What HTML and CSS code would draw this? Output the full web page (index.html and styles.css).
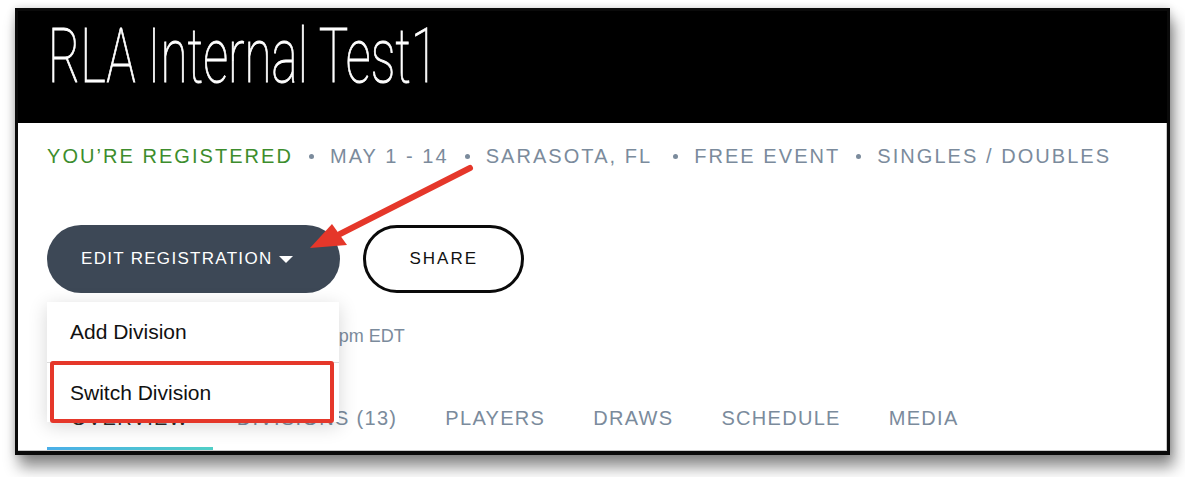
FILE: index.html
```html
<!DOCTYPE html>
<html lang="en">
<head>
<meta charset="utf-8">
<title>RLA Internal Test1</title>
<link rel="stylesheet" href="styles.css">
</head>
<body>
<div class="frame">
  <header class="hero">
    <h1 class="hero-title">RLA Internal Test1</h1>
  </header>
  <main class="content">
    <div class="meta">
      <span class="meta-item meta-ok">YOU’RE REGISTERED</span>
      <span class="meta-dot"></span>
      <span class="meta-item">MAY 1 - 14</span>
      <span class="meta-dot"></span>
      <span class="meta-item meta-place">SARASOTA, FL</span>
      <span class="meta-dot"></span>
      <span class="meta-item">FREE EVENT</span>
      <span class="meta-dot"></span>
      <span class="meta-item">SINGLES / DOUBLES</span>
    </div>
    <div class="actions">
      <div class="dropdown">
        <button class="btn btn-dark">EDIT REGISTRATION<span class="caret"></span></button>
        <div class="menu">
          <div class="menu-item">Add Division</div>
          <div class="menu-item">Switch Division</div>
          <div class="highlight"></div>
        </div>
      </div>
      <button class="btn btn-outline">SHARE</button>
    </div>
    <p class="deadline">Registration closes April 30 at 11:59pm EDT</p>
    <nav class="tabs">
      <span class="tab tab-active">OVERVIEW</span>
      <span class="tab">DIVISIONS (13)</span>
      <span class="tab">PLAYERS</span>
      <span class="tab">DRAWS</span>
      <span class="tab">SCHEDULE</span>
      <span class="tab">MEDIA</span>
    </nav>
  </main>
  <svg class="arrow" width="480" height="260" viewBox="0 0 480 260">
    <line x1="452" y1="157" x2="322" y2="223" stroke="#e5372a" stroke-width="6" stroke-linecap="round"/>
    <polygon points="292,237 314,213 329,234" fill="#e5372a"/>
  </svg>
</div>
</body>
</html>
```

FILE: styles.css
```css
* { box-sizing: border-box; }

html, body {
  margin: 0;
  padding: 0;
  background: #ffffff;
}

body {
  min-height: 477px;
  font-family: "Liberation Sans", Arial, Helvetica, sans-serif;
}

.frame {
  position: relative;
  margin: 8px 0 0 15px;
  width: 1155px;
  border: 3px solid #0a0a0a;
  border-bottom-width: 4px;
  background: #ffffff;
  box-shadow: 4px 12px 14px rgba(0, 0, 0, 0.45), 0 0 8px rgba(0, 0, 0, 0.18);
}

.hero {
  height: 112px;
  background: #000000;
  padding: 0 0 0 30px;
}

.hero-title {
  margin: 0;
  font-family: Roboto, "Liberation Sans", sans-serif;
  font-weight: 100;
  font-size: 76px;
  line-height: 90px;
  height: 90px;
  color: #ffffff;
  -webkit-text-stroke: 0.9px #ffffff;
  white-space: nowrap;
  transform: scaleX(0.65);
  transform-origin: left center;
}

.content {
  padding: 21px 0 0 29px;
  border-right: 1px solid #c9c9c9;
  border-bottom: 1px solid #c9c9c9;
}

.meta {
  display: flex;
  align-items: center;
  height: 24px;
  font-size: 20px;
  letter-spacing: 2.05px;
  color: #7b8b9c;
  white-space: nowrap;
}

.meta-ok { color: #3d8d2d; }

.meta-place { padding-right: 5px; }

.meta-dot {
  width: 5px;
  height: 5px;
  border-radius: 50%;
  background: #7b8b9c;
  margin: 0 16px;
  flex: none;
}

.actions {
  display: flex;
  gap: 23px;
  margin-top: 57px;
}

.dropdown {
  position: relative;
}

.btn {
  height: 68px;
  border-radius: 34px;
  font-family: "Liberation Sans", Arial, sans-serif;
  font-size: 17px;
  display: flex;
  align-items: center;
  cursor: pointer;
}

.btn-dark {
  background: #3d4856;
  color: #ffffff;
  border: none;
  padding: 0 47px 0 34px;
  letter-spacing: 1.3px;
}

.caret {
  display: inline-block;
  width: 0;
  height: 0;
  margin-left: 6px;
  border-left: 7px solid transparent;
  border-right: 7px solid transparent;
  border-top: 7px solid #ffffff;
}

.btn-outline {
  background: #ffffff;
  color: #111111;
  border: 3px solid #0a0a0a;
  padding: 0 43px 0 44px;
  letter-spacing: 2px;
}

.menu {
  position: absolute;
  top: 77px;
  left: 0;
  width: 292px;
  background: #ffffff;
  box-shadow: 0 4px 18px rgba(0, 0, 0, 0.16);
  z-index: 5;
}

.menu-item {
  height: 60px;
  padding-left: 23px;
  display: flex;
  align-items: center;
  font-size: 21px;
  color: #111111;
}

.menu-item + .menu-item {
  border-top: 1px solid #dcdcdc;
}

.highlight {
  position: absolute;
  left: 3px;
  top: 59px;
  width: 284px;
  height: 62px;
  border: 4px solid #e5372a;
  border-radius: 3px;
}

.deadline {
  margin: 32px 0 0 6px;
  font-size: 18px;
  line-height: 22px;
  color: #7b8b9c;
}

.tabs {
  display: flex;
  margin-top: 59px;
}

.tab {
  padding: 0 24px 17px 24px;
  font-size: 20px;
  line-height: 24px;
  letter-spacing: 1.3px;
  color: #7b8b9c;
  border-bottom: 3px solid transparent;
  white-space: nowrap;
}

.tab-active {
  color: #2b2b2b;
  border-image: linear-gradient(90deg, #4aaee8, #50cfc6) 1;
}

.arrow {
  position: absolute;
  left: 0;
  top: 0;
  z-index: 10;
  pointer-events: none;
}
```
